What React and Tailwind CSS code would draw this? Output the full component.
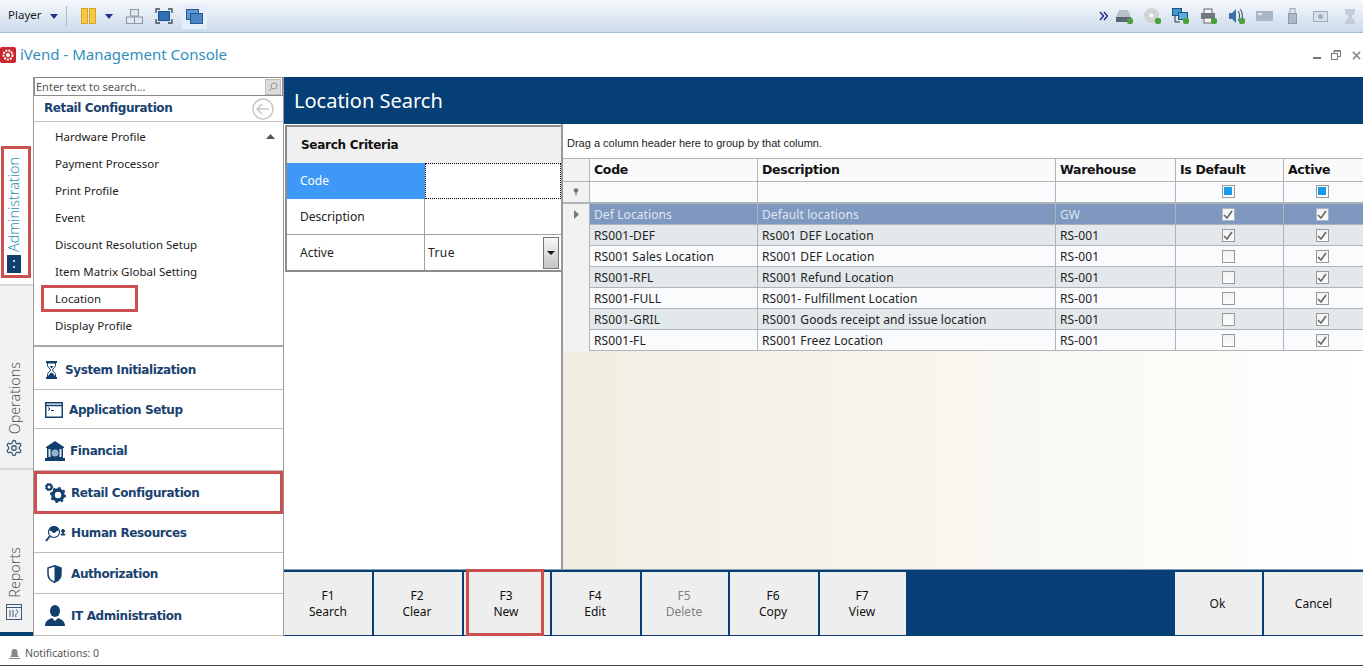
import React from "react";

const Caret = () => (
  <svg width="8" height="5" viewBox="0 0 8 5"><path d="M0 0h8L4 5z" fill="#24308f" /></svg>
);

function PauseIcon() {
  return (
    <svg width="15" height="16" viewBox="0 0 15 16">
      <rect x="0.500" y="0.500" width="6" height="15" fill="#f5c945" stroke="#d9a520" />
      <rect x="8.500" y="0.500" width="6" height="15" fill="#f5c945" stroke="#d9a520" />
    </svg>
  );
}
function TilesIcon() {
  return (
    <svg width="19" height="17" viewBox="0 0 19 17" fill="#e4e8ee" stroke="#8a96a6">
      <rect x="5.500" y="1.500" width="8" height="6.500" />
      <rect x="1.500" y="9" width="8" height="6.500" />
      <rect x="9.500" y="9" width="8" height="6.500" />
    </svg>
  );
}
function FullIcon() {
  return (
    <svg width="18" height="16" viewBox="0 0 18 16">
      <rect x="3.500" y="3.500" width="11" height="9" fill="#2f6fb5" stroke="#24507f" />
      <path d="M1 5V1h4M13 1h4v4M17 11v4h-4M5 15H1v-4" fill="none" stroke="#3c4a5c" strokeWidth="1.300" />
    </svg>
  );
}
function WindowsIcon() {
  return (
    <div className="w-[25px] h-[25px] bg-[#e6eff9] flex items-center justify-center">
      <svg width="17" height="15" viewBox="0 0 17 15">
        <rect x="0.500" y="0.500" width="12" height="10" fill="#5f97d2" stroke="#27578f" />
        <rect x="4.500" y="4.500" width="12" height="10" fill="#4c86c6" stroke="#27578f" />
      </svg>
    </div>
  );
}
const Dot = () => <rect x="11" y="10" width="6" height="6" rx="2" fill="#4f9e3a" />;
const TrayIcons = [
  <svg key="a" width="17" height="16" viewBox="0 0 17 16"><path d="M3 2h9l3 7H0z" fill="#b9c0c8" /><rect x="0" y="9" width="15" height="5" fill="#5c6670" /><Dot /></svg>,
  <svg key="b" width="17" height="16" viewBox="0 0 17 16"><circle cx="7.500" cy="7.500" r="7.500" fill="#cfd3d6" /><circle cx="7.500" cy="7.500" r="2" fill="#fff" /><Dot /></svg>,
  <svg key="c" width="17" height="16" viewBox="0 0 17 16"><rect x="0.500" y="0.500" width="9" height="7" fill="#3f9bd4" stroke="#24507f" /><rect x="6.500" y="4.500" width="9" height="7" fill="#58aee0" stroke="#24507f" /><path d="M3 8v6h5" stroke="#333" fill="none" /><Dot /></svg>,
  <svg key="d" width="17" height="16" viewBox="0 0 17 16"><rect x="4" y="1" width="8" height="5" fill="#f0f0f0" stroke="#666" /><rect x="1" y="5" width="14" height="6" fill="#6f7780" /><rect x="4" y="10" width="8" height="5" fill="#f5f5f5" stroke="#666" /><Dot /></svg>,
  <svg key="e" width="17" height="16" viewBox="0 0 17 16"><path d="M1 5h3l4-4v14l-4-4H1z" fill="#3d6ea8" /><path d="M10 3c2 2 2 8 0 10M12 1c3 3 3 11 0 14" stroke="#28435f" fill="none" /><Dot /></svg>,
  <svg key="f" width="17" height="10" viewBox="0 0 17 10"><rect width="17" height="10" fill="#a9b8c9" /><rect x="2" y="2" width="4" height="2" fill="#dfe6ee" /></svg>,
  <svg key="g" width="9" height="16" viewBox="0 0 9 16"><rect x="2" y="0.500" width="5" height="5" fill="#dfe5ec" stroke="#9aa8b8" /><rect x="0.500" y="5.500" width="8" height="10" fill="#aab8c8" stroke="#8a98a8" /></svg>,
  <svg key="h" width="15" height="12" viewBox="0 0 15 12"><rect x="0.500" y="1.500" width="14" height="10" fill="#d7dfe8" stroke="#a0adbc" /><circle cx="7.500" cy="6.500" r="2.500" fill="#a0adbc" /></svg>,
  <svg key="i" width="10" height="15" viewBox="0 0 10 15"><path d="M0 0h10v4L7 7v2l3 3v3H0v-3l3-3V7L0 4z" fill="#c3ccd6" /></svg>,
];

function Toolbar() {
  return (
    <div className="h-[33px] shrink-0 flex items-center bg-gradient-to-b from-[#f6f9fd] to-[#cbdaeb] border-b border-[#a9bdd4]">
      <span className="ml-[8px] w-[42px] pb-[2px] text-[11.500px] text-[#1c1c1c]">Player</span>
      <span className="flex"><Caret /></span>
      <span className="ml-[8px] h-[20px] w-px bg-[#a9bccf]" />
      <span className="ml-[14px] flex"><PauseIcon /></span>
      <span className="ml-[9px] flex"><Caret /></span>
      <span className="ml-[12px] flex"><TilesIcon /></span>
      <span className="ml-[11px] flex"><FullIcon /></span>
      <span className="ml-[9px] flex"><WindowsIcon /></span>
      <div className="ml-auto flex items-center">
        <svg width="9" height="10" viewBox="0 0 9 10" fill="none" stroke="#24308f" strokeWidth="1.500" className="mr-[7px]">
          <path d="M1 1l3.500 4L1 9M5 1l3.500 4L5 9" />
        </svg>
        <div className="flex items-center gap-[10px] mr-[4px]">
          {TrayIcons.map((ic, i) => (
            <span key={ic.key} className={`w-[18px] flex justify-center ${i === 8 ? "ml-[2px]" : ""}`}>{ic}</span>
          ))}
        </div>
      </div>
    </div>
  );
}

function TitleBar() {
  return (
    <div className="h-[44px] shrink-0 flex items-center">
      <svg width="16" height="16" viewBox="0 0 16 16" className="shrink-0">
        <rect width="16" height="16" rx="2" fill="#c8252c" />
        <circle cx="8" cy="8" r="4.500" fill="none" stroke="#fff" strokeWidth="2" strokeDasharray="2 1" />
        <circle cx="8" cy="8" r="2" fill="#fff" />
      </svg>
      <span className="ml-[4px] pb-[2px] text-[15px] text-[#2f8fbc]">iVend - Management Console</span>
      <div className="ml-auto flex items-center mr-[2px] text-[#777]">
        <span className="w-[8px] h-[2px] bg-[#777] mt-[6px] mr-[10px]" />
        <svg width="10" height="10" viewBox="0 0 10 10" fill="none" stroke="#777" className="mr-[11px]">
          <rect x="0.500" y="3.500" width="6" height="6" fill="#fff" />
          <path d="M3 3V0.500h6.500V6.500H7" />
          <path d="M3 1.200h6.500" />
        </svg>
        <svg width="9" height="9" viewBox="0 0 10 10" stroke="#888" strokeWidth="1.700">
          <path d="M1 1l8 8M9 1l-8 8" />
        </svg>
      </div>
    </div>
  );
}

function TabStrip() {
  return (
    <div className="w-[34px] shrink-0 flex flex-col border-r border-[#9b9b9b] bg-white">
      <div className="h-[207px] pt-[69px] pl-[1px]">
        <div className="w-[30px] h-[132px] border-[3px] border-[#cd5050] flex flex-col items-center justify-end pb-[2px] pr-[5px]">
          <span className="[writing-mode:vertical-rl] rotate-180 text-[14.300px] font-light leading-[17px] text-[#2f8fb5]">Administration</span>
          <svg width="14" height="18" viewBox="0 0 14 18" className="mt-[3px]">
            <rect width="14" height="18" fill="#123f6e" />
            <circle cx="7" cy="6" r="1" fill="#fff" />
            <circle cx="7" cy="12" r="1" fill="#fff" />
          </svg>
        </div>
      </div>
      <div className="h-[184px] bg-[#f2f2f2] border-t-[2px] border-[#d8d8d8] flex flex-col items-center justify-end pb-[11px] pr-[5px]">
        <span className="[writing-mode:vertical-rl] rotate-180 text-[14.300px] font-light leading-[17px] text-[#555]">Operations</span>
        <svg width="18" height="18" viewBox="0 0 24 24" fill="none" stroke="#3d5a78" strokeWidth="1.700" className="mt-[5px]">
          <path d="M12.220 2h-.440a2 2 0 0 0-2 2v.180a2 2 0 0 1-1 1.730l-.430.250a2 2 0 0 1-2 0l-.150-.080a2 2 0 0 0-2.730.730l-.220.380a2 2 0 0 0 .730 2.730l.150.100a2 2 0 0 1 1 1.720v.510a2 2 0 0 1-1 1.740l-.150.090a2 2 0 0 0-.730 2.730l.220.380a2 2 0 0 0 2.730.730l.150-.080a2 2 0 0 1 2 0l.430.250a2 2 0 0 1 1 1.730V20a2 2 0 0 0 2 2h.440a2 2 0 0 0 2-2v-.180a2 2 0 0 1 1-1.730l.430-.250a2 2 0 0 1 2 0l.150.080a2 2 0 0 0 2.730-.730l.220-.390a2 2 0 0 0-.730-2.730l-.150-.080a2 2 0 0 1-1-1.740v-.500a2 2 0 0 1 1-1.740l.150-.090a2 2 0 0 0 .730-2.730l-.220-.380a2 2 0 0 0-2.730-.730l-.150.080a2 2 0 0 1-2 0l-.430-.250a2 2 0 0 1-1-1.730V4a2 2 0 0 0-2-2z" />
          <circle cx="12" cy="12" r="3" />
        </svg>
      </div>
      <div className="flex-1 bg-[#f2f2f2] border-t-[2px] border-[#d8d8d8] flex flex-col items-center justify-end pb-[12px] pr-[5px]">
        <span className="[writing-mode:vertical-rl] rotate-180 text-[14.300px] font-light leading-[17px] text-[#555]">Reports</span>
        <svg width="16" height="16" viewBox="0 0 16 16" fill="none" stroke="#3d5a78" className="mt-[6px]">
          <rect x="0.500" y="0.500" width="15" height="15" />
          <path d="M0 3.500h16M4 6v7M7 6v7M10 6c2 0 2 3 1 3.500S9 11 10 13" />
        </svg>
      </div>
      <div className="h-[4px] bg-[#063f75]" />
    </div>
  );
}

const navItems = ["Hardware Profile", "Payment Processor", "Print Profile", "Event", "Discount Resolution Setup", "Item Matrix Global Setting", "Location", "Display Profile"];

const ic = "#123f6e";
const sections = [
  { label: "System Initialization", h: "h-[43px] pt-[3px]", gap: "ml-[11px] w-[20px]", icon: (
    <svg width="13" height="18" viewBox="0 0 13 18"><path d="M1 1h11M1 17h11" stroke={ic} strokeWidth="2" /><path d="M2.500 2v2.500c0 2 3 3 3 4.500s-3 2.500-3 4.500V16h8v-2.500c0-2-3-3-3-4.500s3-2.500 3-4.500V2z" fill="#fff" stroke={ic} /><path d="M3 16c0-2 2-3.500 3.500-4.500 1.500 1 3.500 2.500 3.500 4.500z" fill={ic} /><path d="M4.500 5h4l-2 2.500z" fill={ic} /></svg>
  ) },
  { label: "Application Setup", h: "h-[39px] pt-[2px]", gap: "ml-[11px] w-[24px]", icon: (
    <svg width="18" height="16" viewBox="0 0 18 16"><rect x="0.750" y="0.750" width="16.500" height="14.500" fill="#fff" stroke={ic} strokeWidth="1.500" /><path d="M1 3.500h16" stroke={ic} strokeWidth="1.500" /><path d="M3 5.500l2 1.500-2 1.500M6 8.500h3" stroke={ic} fill="none" /></svg>
  ) },
  { label: "Financial", h: "h-[42px] pt-[2px]", gap: "ml-[11px] w-[25px]", icon: (
    <svg width="20" height="20" viewBox="0 0 20 20" fill={ic}><path d="M10 0l9 6v1H1V6z" /><rect x="2" y="7" width="16" height="10" /><rect x="0" y="17" width="20" height="3" /><circle cx="10" cy="12" r="3.500" fill="#8fb4d4" /><rect x="3.500" y="8" width="2" height="8" fill="#dfe9f2" /><rect x="14.500" y="8" width="2" height="8" fill="#dfe9f2" /></svg>
  ) },
  { label: "Retail Configuration", h: "h-[43px]", gap: "ml-[8px] w-[26px]", red: true, icon: (
    <svg width="21" height="20" viewBox="0 0 21 20"><circle cx="4" cy="4" r="2.500" fill="none" stroke={ic} strokeWidth="2" /><circle cx="13" cy="12" r="5" fill="none" stroke={ic} strokeWidth="3.500" /><circle cx="13" cy="12" r="7" fill="none" stroke={ic} strokeWidth="2" strokeDasharray="2.500 3" /><circle cx="4" cy="4" r="3.700" fill="none" stroke={ic} strokeWidth="1" strokeDasharray="1.500 1.500" /></svg>
  ) },
  { label: "Human Resources", h: "h-[39px]", gap: "ml-[11px] w-[26px]", icon: (
    <svg width="21" height="17" viewBox="0 0 21 17" fill="none" stroke={ic}><circle cx="9" cy="7" r="5.500" strokeWidth="1.200" /><path d="M5 5.500a4 4 0 0 1 8 0z" fill={ic} /><circle cx="9" cy="5.500" r="2" fill={ic} /><path d="M5 11l-4 5" strokeWidth="2" /><circle cx="18" cy="6" r="1.500" fill={ic} /><path d="M16 10c0-2 4-2 4 0z" fill={ic} /></svg>
  ) },
  { label: "Authorization", h: "h-[41px] pt-[2px]", gap: "ml-[13px] w-[24px]", icon: (
    <svg width="15" height="18" viewBox="0 0 15 18"><path d="M7.500 0.800L14 3v6c0 4-3 7-6.500 8.300C4 16 1 13 1 9V3z" fill="#fff" stroke={ic} strokeWidth="1.500" /><path d="M7.500 1L14 3v6c0 4-3 7-6.500 8z" fill={ic} /></svg>
  ) },
  { label: "IT Administration", h: "h-[42px] pt-[2px]", gap: "ml-[11px] w-[26px]", icon: (
    <svg width="20" height="21" viewBox="0 0 20 21" fill={ic}><ellipse cx="10" cy="6" rx="5" ry="6" /><path d="M0 21c0-5 4-7 7-8l3 3 3-3c3 1 7 3 7 8z" /></svg>
  ) },
];

function Nav() {
  return (
    <div className="w-[250px] shrink-0 flex flex-col border-r border-[#9b9b9b]">
      <div className="h-[19px] flex items-center border border-[#8a8a8a] pl-[1px] pr-[1px] text-[11px] text-[#555]">
        <span className="flex-1 pt-[1px]">Enter text to search...</span>
        <span className="w-[16px] h-[16px] bg-[#dcdcdc] border border-[#bbb] flex items-center justify-center">
          <svg width="10" height="10" viewBox="0 0 10 10" fill="none" stroke="#999"><circle cx="6" cy="4" r="3" /><path d="M4 6L1 9" /></svg>
        </span>
      </div>
      <div className="h-[26px] flex items-center justify-between pl-[10px] pr-[9px] border-b border-[#c4c4c4]">
        <span className="pb-[2px] font-['DejaVu_Sans'] font-bold text-[12px] text-[#1a4270] tracking-[-0.400px]">Retail Configuration</span>
        <svg width="22" height="22" viewBox="0 0 22 22" fill="none" stroke="#c8c8c8" strokeWidth="1.500">
          <circle cx="11" cy="11" r="10" />
          <path d="M17 11H5M10 6l-5 5 5 5" />
        </svg>
      </div>
      <div className="h-[225px] relative border-b-[2px] border-[#a8a8a8] pt-[1px]">
        {navItems.map((n) => (
          <div key={n} className="h-[27px] flex items-center pl-[21px] text-[11.500px] text-[#222]">
            {n === "Location" ? (
              <span className="-ml-[14px] w-[97px] h-[27px] pl-[11px] border-[3px] border-[#cd5050] flex items-center">{n}</span>
            ) : n}
          </div>
        ))}
        <svg width="9" height="5" viewBox="0 0 9 5" className="absolute right-[8px] top-[12px]"><path d="M0 5L4.500 0 9 5z" fill="#555" /></svg>
      </div>
      {sections.map((s) => (
        <div key={s.label} className={`${s.h} flex items-center ${s.red ? "border-[3px] border-[#cd5050]" : "border-b border-[#bdbdbd]"}`}>
          <span className={`${s.gap} flex`}>{s.icon}</span>
          <span className="font-['DejaVu_Sans'] font-bold text-[12px] text-[#1a4270] tracking-[-0.400px]">{s.label}</span>
        </div>
      ))}
    </div>
  );
}

function Criteria() {
  return (
    <div className="w-[279px] shrink-0 flex flex-col border-r-[2px] border-[#9a9a9a] bg-white pl-[1px] pt-[1px]">
      <div className="border-l-[2px] border-t-[2px] border-b-[2px] border-[#8c8c8c] w-[276px]">
        <div className="h-[36px] bg-[#f0f0f0] flex items-center pl-[14px] font-['DejaVu_Sans'] font-bold text-[12px] text-[#111] tracking-[-0.270px]">Search Criteria</div>
        <div className="flex h-[36px]">
          <div className="w-[138px] bg-[#3d99f5] text-white flex items-center pl-[13px]">Code</div>
          <div className="flex-1 border-[1px] border-dotted border-black" />
        </div>
        <div className="flex h-[36px] border-b border-[#a0a0a0]">
          <div className="w-[138px] flex items-center pl-[13px] border-r border-[#a0a0a0]">Description</div>
          <div className="flex-1" />
        </div>
        <div className="flex h-[35px]">
          <div className="w-[138px] flex items-center pl-[13px] border-r border-[#a0a0a0]">Active</div>
          <div className="flex-1 flex items-center pl-[3px] pr-[2px] justify-between">
            <span className="tracking-[0.400px]">True</span>
            <span className="w-[16px] h-[32px] bg-gradient-to-b from-[#f8f8f8] to-[#c4c4c4] border border-[#777] flex items-center justify-center">
              <svg width="8" height="4" viewBox="0 0 8 4"><path d="M0 0h8L4 4z" fill="#111" /></svg>
            </span>
          </div>
        </div>
      </div>
    </div>
  );
}

const rows = [
  ["Def Locations", "Default locations", "GW", true, true],
  ["RS001-DEF", "Rs001 DEF Location", "RS-001", true, true],
  ["RS001 Sales Location", "RS001 DEF Location", "RS-001", false, true],
  ["RS001-RFL", "RS001 Refund Location", "RS-001", false, true],
  ["RS001-FULL", "RS001- Fulfillment Location", "RS-001", false, true],
  ["RS001-GRIL", "RS001 Goods receipt and issue location", "RS-001", false, true],
  ["RS001-FL", "RS001 Freez Location", "RS-001", false, true],
];

const Check = ({ on, sel }) => (
  <span className={`w-[13px] h-[13px] border ${sel ? "border-[#a8b4c8]" : "border-[#999]"} bg-gradient-to-b from-[#f2f2f2] to-[#fdfdfd] flex items-center justify-center`}>
    {on && <svg width="10" height="9" viewBox="0 0 10 9" fill="none" stroke="#666" strokeWidth="1.600"><path d="M1 5l3 3 5-7" /></svg>}
  </span>
);
const Blue = () => (
  <span className="w-[13px] h-[13px] border border-[#999] bg-white flex items-center justify-center"><span className="w-[8px] h-[8px] bg-[#1a9be8]" /></span>
);

const cols = "grid grid-cols-[26px_168px_298px_120px_108px_80px]";

function Grid() {
  return (
    <div className="flex-1 flex flex-col min-w-0 bg-gradient-to-r from-[#f1ede1] via-[#f8f6ef] to-white">
      <div className="bg-white h-[34px] flex items-center pl-[4px] pt-[5px] font-['Liberation_Sans'] text-[11px] text-[#222]">Drag a column header here to group by that column.</div>
      <div className="bg-white tracking-[0.100px]">
        <div className={`${cols} h-[23px] border-t border-[#aeb4ba] bg-[#fafafa] font-['DejaVu_Sans'] font-bold text-[12.500px] text-[#111] tracking-[-0.300px]`}>
          <div className="bg-[#f2f2f2]" />
          {["Code", "Description", "Warehouse", "Is Default", "Active"].map((h) => (
            <div key={h} className="border-l border-[#aeb4ba] pl-[4px] flex items-center">{h}</div>
          ))}
        </div>
        <div className={`${cols} h-[23px] border-t border-b-[2px] border-[#aeb4ba] bg-[#fafbfc]`}>
          <div className="bg-[#f2f2f2] flex items-center justify-center">
            <svg width="6" height="8" viewBox="0 0 6 8"><circle cx="3" cy="2.500" r="2.300" fill="#777" /><path d="M3 4v4" stroke="#777" /></svg>
          </div>
          <div className="border-l border-[#aeb4ba]" />
          <div className="border-l border-[#aeb4ba]" />
          <div className="border-l border-[#aeb4ba]" />
          <div className="border-l border-[#aeb4ba] flex items-center justify-center pr-[3px] pb-[2px]"><Blue /></div>
          <div className="border-l border-[#aeb4ba] flex items-center justify-center pr-[3px] pb-[2px]"><Blue /></div>
        </div>
        {rows.map((r, i) => {
          const sel = i === 0;
          const bg = sel ? "bg-[#7f98c0] text-[#dfe6f0]" : i % 2 === 1 ? "bg-[#e3e8ea]" : "bg-[#fafbfc]";
          const b = "border-l border-[#aeb4ba] border-b flex items-center";
          return (
            <div key={r[0]} className={`${cols} h-[21px]`}>
              <div className="bg-[#f2f2f2] flex items-center justify-center">
                {sel && <svg width="5" height="9" viewBox="0 0 5 9"><path d="M0 0l5 4.500L0 9z" fill="#777" /></svg>}
              </div>
              <div className={`${b} ${bg} pl-[4px] pt-[2px]`}>{r[0]}</div>
              <div className={`${b} ${bg} pl-[4px] pt-[2px]`}>{r[1]}</div>
              <div className={`${b} ${bg} pl-[4px] pt-[2px]`}>{r[2]}</div>
              <div className={`${b} ${bg} justify-center pr-[3px]`}><Check on={r[3]} sel={sel} /></div>
              <div className={`${b} ${bg} justify-center pr-[3px]`}><Check on={r[4]} sel={sel} /></div>
            </div>
          );
        })}
      </div>
    </div>
  );
}

const fkeys = [
  ["F1", "Search", "w-[88px] mr-[2px]"],
  ["F2", "Clear", "w-[88px] mr-[2px] pr-[2px]"],
  ["F3", "New", "w-[86px] mr-[2px] pr-[2px]", true],
  ["F4", "Edit", "w-[88px] mr-[2px] pr-[2px]"],
  ["F5", "Delete", "w-[86px] mr-[2px] pr-[2px]", false, true],
  ["F6", "Copy", "w-[88px] mr-[2px] pr-[2px]"],
  ["F7", "View", "w-[86px] pr-[2px]"],
];

function Buttons() {
  return (
    <div className="h-[67px] shrink-0 bg-[#063f75] flex pt-[2px] pb-[1px] border-t border-[#8ca0b4]">
      {fkeys.map(([k, l, w, red, dis]) => (
        <div key={k} className={`${w} bg-[#eeeeee] flex flex-col items-center justify-center text-[12px] leading-[16px] ${dis ? "text-[#808080]" : "text-[#111]"} ${red ? "relative" : ""}`}>
          {red && <span className="absolute left-[2px] right-[6px] -top-[3px] -bottom-[1px] border-[3px] border-[#cd5050]" />}
          <span>{k}</span>
          <span>{l}</span>
        </div>
      ))}
      <div className="flex-1" />
      <div className="w-[87px] mr-[2px] pr-[2px] bg-[#eeeeee] flex items-center justify-center text-[12px] text-[#111]">Ok</div>
      <div className="w-[99px] bg-[#eeeeee] flex items-center justify-center text-[12px] text-[#111]">Cancel</div>
    </div>
  );
}

export default function App() {
  return (
    <div className="w-[1363px] h-[666px] flex flex-col overflow-hidden bg-white font-['Noto_Sans',sans-serif] text-[12px] text-[#222]">
      <Toolbar />
      <TitleBar />
      <div className="flex-1 min-h-0 flex">
        <TabStrip />
        <Nav />
        <div className="flex-1 min-w-0 flex flex-col">
          <div className="h-[47px] shrink-0 bg-[#063f75] flex items-center pl-[10px] text-[20px] text-white">Location Search</div>
          <div className="flex-1 min-h-0 flex">
            <Criteria />
            <Grid />
          </div>
          <Buttons />
        </div>
      </div>
      <div className="h-[30px] shrink-0 flex items-center pl-[9px] pt-[7px] border-b-[1px] border-[#444] text-[10.500px] text-[#555]">
        <svg width="11" height="11" viewBox="0 0 11 11" fill="#888" className="mr-[5px]"><path d="M5.500 0a3 3 0 0 1 3 3v3l1.500 2H1l1.500-2V3a3 3 0 0 1 3-3z" /><rect x="0" y="9" width="11" height="1" /></svg>
        Notifications: 0
      </div>
    </div>
  );
}
